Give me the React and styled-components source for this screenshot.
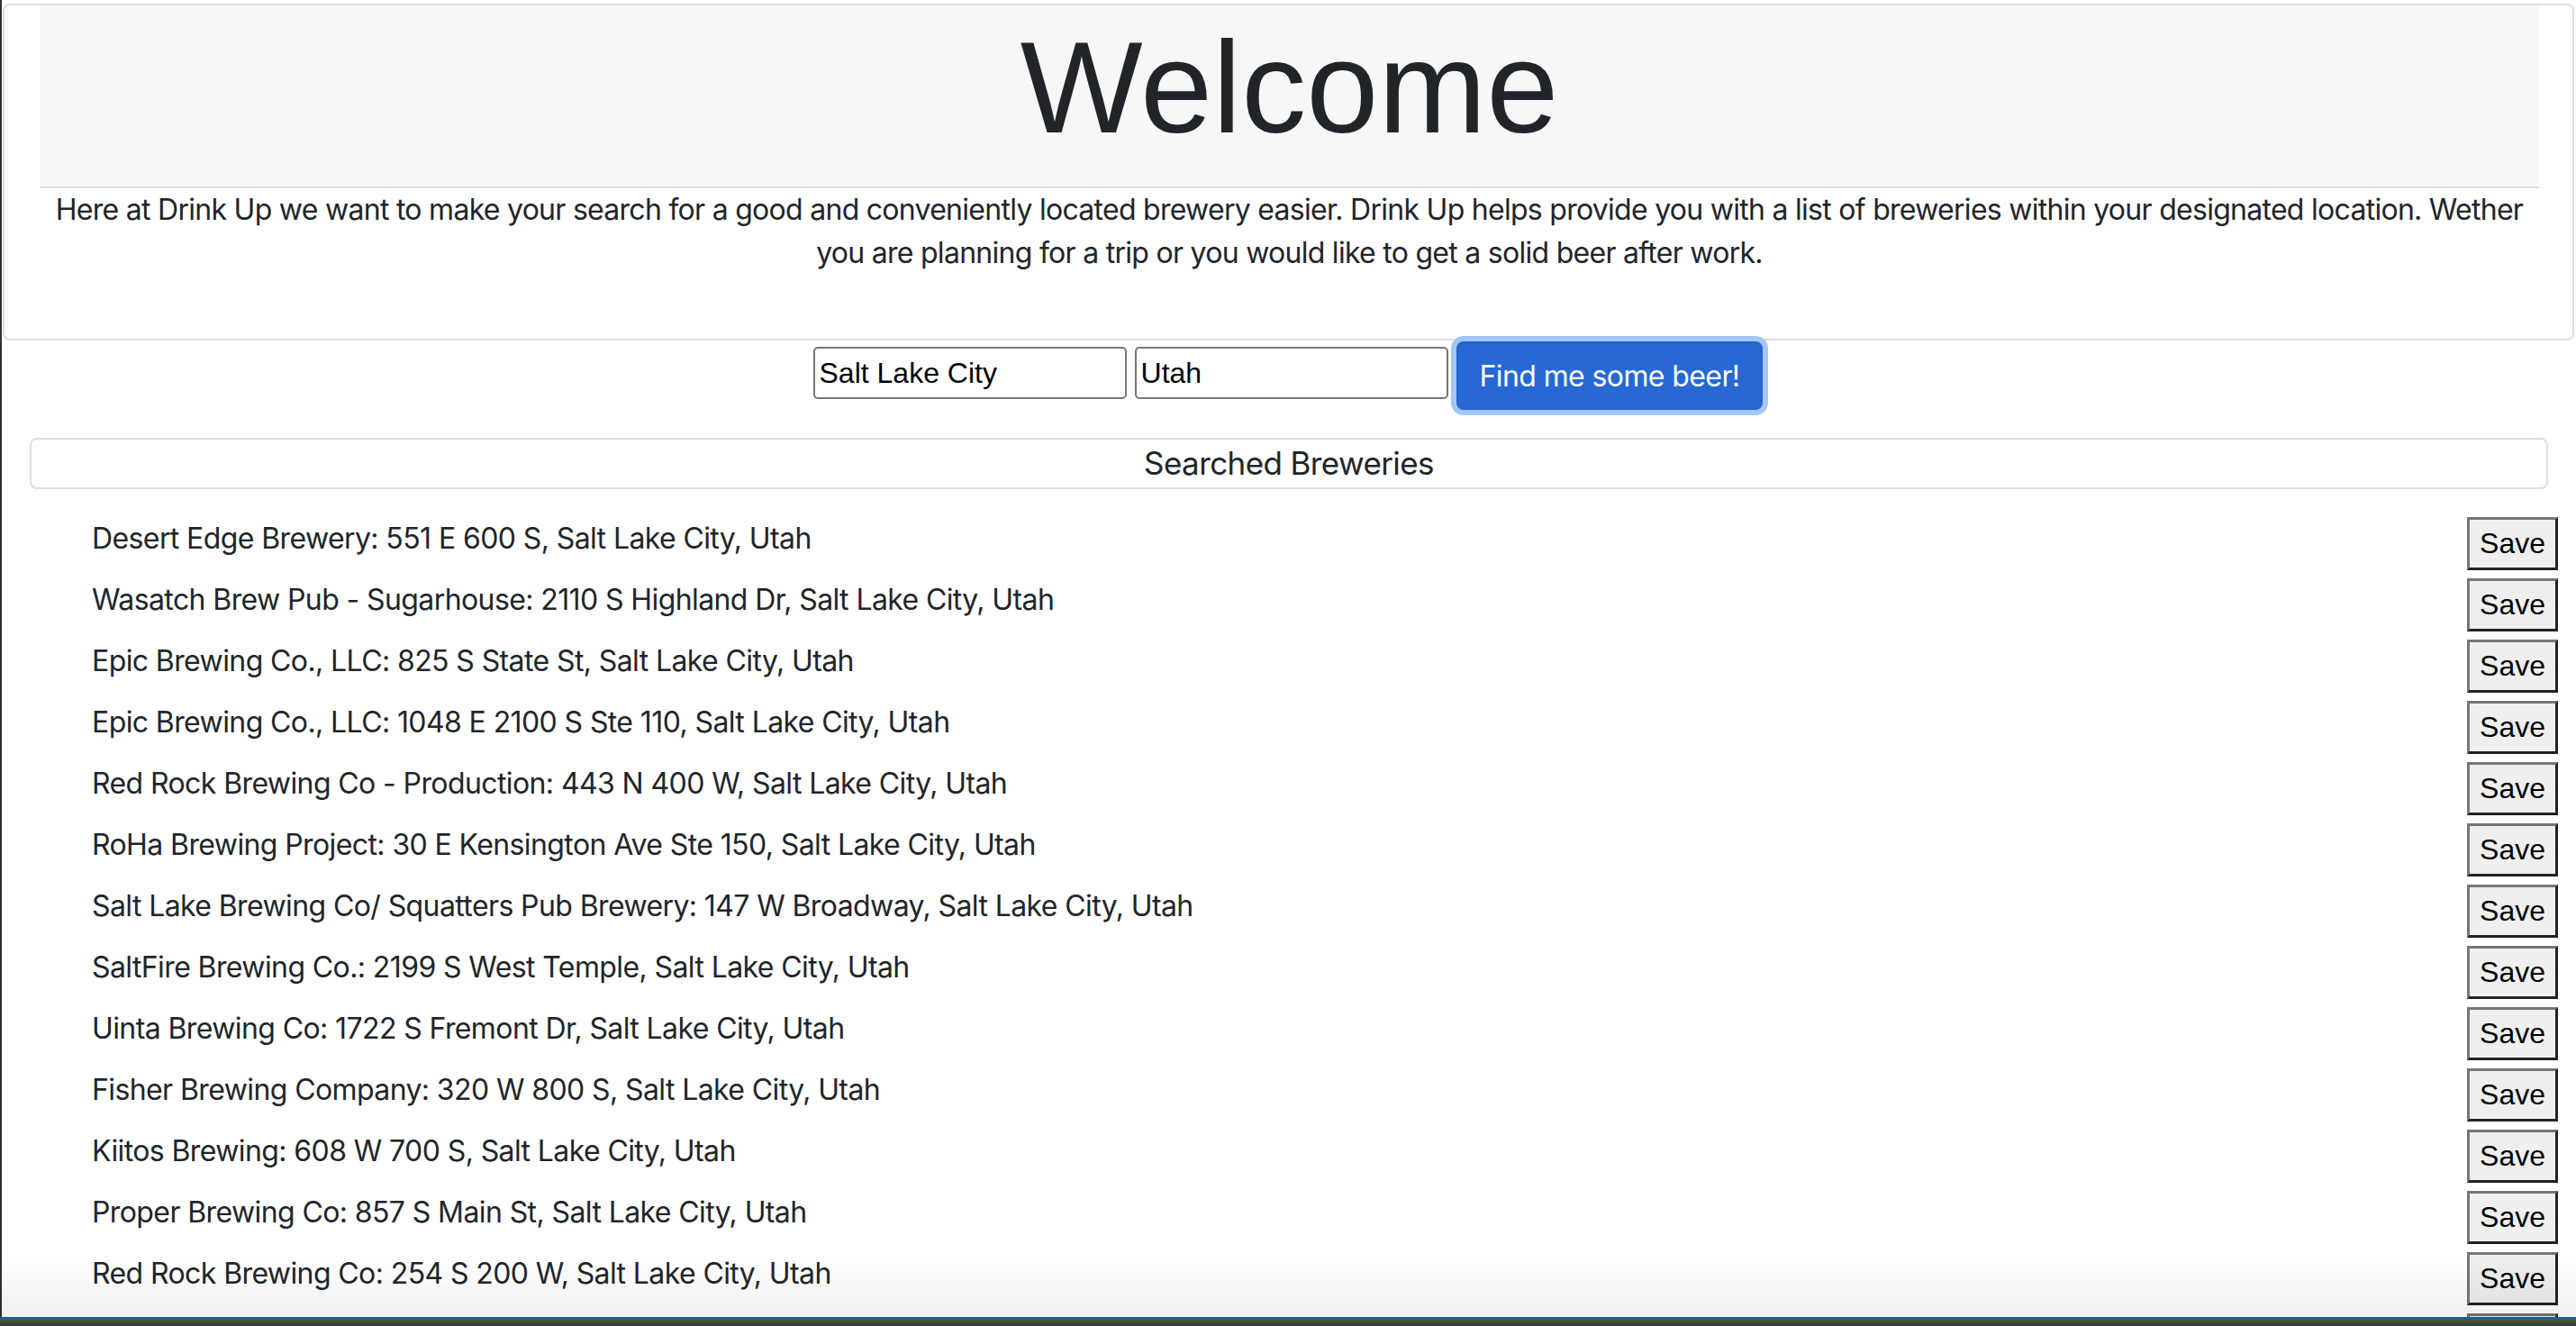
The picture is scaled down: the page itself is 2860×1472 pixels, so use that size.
import React from 'react'
import styled, { createGlobalStyle } from 'styled-components'

const GlobalStyle = createGlobalStyle`
  html, body {
    margin: 0;
    background: #fff;
  }
  body {
    font-family: Inter, "Noto Sans", sans-serif;
    font-size: 32px;
    line-height: 1.5;
    letter-spacing: -0.6px;
    color: #212529;
    overflow: hidden;
  }
`

const Page = styled.div`
  padding-top: 4px;
`

const Card = styled.div`
  margin: 0 2px 0 3px;
  border: 2px solid #dfdfdf;
  border-radius: 8px;
  padding: 0 37px 71px 39px;
`

const Header = styled.div`
  background: #f7f7f7;
  border-bottom: 2px solid #dadada;
  height: 203px;
  padding-top: 6px;
  box-sizing: border-box;
  text-align: center;
`

const Title = styled.h1`
  margin: 0;
  font-family: "Liberation Sans", Arial, sans-serif;
  font-weight: 400;
  font-size: 144px;
  line-height: 1.2;
  letter-spacing: 0;
  color: #212529;
`

const Intro = styled.p`
  margin: 0;
  text-align: center;
  letter-spacing: -0.72px;
`

const SearchRow = styled.form`
  display: flex;
  justify-content: center;
  align-items: flex-start;
  gap: 9px;
  margin-top: 1px;
`

const TextInput = styled.input`
  width: 348px;
  height: 58px;
  margin-top: 6px;
  box-sizing: border-box;
  border: 2px solid #767676;
  border-radius: 5px;
  padding: 0 5px;
  font-family: "Liberation Sans", Arial, sans-serif;
  font-size: 32px;
  color: #000;
  background: #fff;
  outline: none;
`

const FindButton = styled.button`
  height: 76px;
  padding: 0 24px;
  border: 2px solid #2462c8;
  border-radius: 8px;
  background: #2768d3;
  color: #fff;
  font-family: Inter, "Noto Sans", sans-serif;
  font-size: 32px;
  letter-spacing: -0.6px;
  box-shadow: 0 0 0 6px #a3c6f7;
  cursor: pointer;
`

const SectionBox = styled.div`
  margin: 31px 31px 0 33px;
  height: 57px;
  box-sizing: border-box;
  border: 2px solid #dfdfdf;
  border-radius: 8px;
  text-align: center;
  font-size: 35px;
  line-height: 53px;
`

const List = styled.ul`
  list-style: none;
  margin: 31px 0 0;
  padding: 0 20px 0 102px;
`

const Row = styled.li`
  display: flex;
  justify-content: space-between;
  align-items: flex-start;
  height: 59px;
  margin-bottom: 9px;
`

const SaveButton = styled.button`
  height: 59px;
  padding: 0 11px;
  border-style: solid;
  border-width: 3px;
  border-color: #767676 #222 #222 #767676;
  background: #efefef;
  color: #000;
  font-family: "Liberation Sans", Arial, sans-serif;
  font-size: 32px;
  letter-spacing: 0;
  cursor: pointer;
`

const EdgeLeft = styled.div`
  position: fixed;
  left: 0;
  top: 0;
  bottom: 0;
  width: 2px;
  background: #2f2f2f;
`

const BottomFade = styled.div`
  position: fixed;
  left: 0;
  right: 0;
  bottom: 10px;
  height: 70px;
  background: linear-gradient(rgba(0, 0, 0, 0), rgba(0, 0, 0, 0.06));
  pointer-events: none;
`

const Desktop = styled.div`
  position: fixed;
  left: 0;
  right: 0;
  bottom: 0;
  height: 10px;
  background: linear-gradient(#1d5d93 0, #1d5d93 3px, #4d5a3c 3px, #2f3a28 100%);
`

const breweries = [
  'Desert Edge Brewery: 551 E 600 S, Salt Lake City, Utah',
  'Wasatch Brew Pub - Sugarhouse: 2110 S Highland Dr, Salt Lake City, Utah',
  'Epic Brewing Co., LLC: 825 S State St, Salt Lake City, Utah',
  'Epic Brewing Co., LLC: 1048 E 2100 S Ste 110, Salt Lake City, Utah',
  'Red Rock Brewing Co - Production: 443 N 400 W, Salt Lake City, Utah',
  'RoHa Brewing Project: 30 E Kensington Ave Ste 150, Salt Lake City, Utah',
  'Salt Lake Brewing Co/ Squatters Pub Brewery: 147 W Broadway, Salt Lake City, Utah',
  'SaltFire Brewing Co.: 2199 S West Temple, Salt Lake City, Utah',
  'Uinta Brewing Co: 1722 S Fremont Dr, Salt Lake City, Utah',
  'Fisher Brewing Company: 320 W 800 S, Salt Lake City, Utah',
  'Kiitos Brewing: 608 W 700 S, Salt Lake City, Utah',
  'Proper Brewing Co: 857 S Main St, Salt Lake City, Utah',
  'Red Rock Brewing Co: 254 S 200 W, Salt Lake City, Utah',
]

function App() {
  return (
    <Page>
      <GlobalStyle />
      <Card>
        <Header>
          <Title>Welcome</Title>
        </Header>
        <Intro>
          Here at Drink Up we want to make your search for a good and conveniently located brewery easier. Drink Up helps provide you with a list of breweries within your designated location. Wether you are planning for a trip or you would like to get a solid beer after work.
        </Intro>
      </Card>

      <SearchRow onSubmit={e => e.preventDefault()}>
        <TextInput defaultValue="Salt Lake City" />
        <TextInput defaultValue="Utah" />
        <FindButton type="submit">Find me some beer!</FindButton>
      </SearchRow>

      <SectionBox>Searched Breweries</SectionBox>

      <List>
        {breweries.map((b, i) => (
          <Row key={i}>
            <span>{b}</span>
            <SaveButton>Save</SaveButton>
          </Row>
        ))}
        <Row>
          <span />
          <SaveButton>Save</SaveButton>
        </Row>
      </List>

      <EdgeLeft />
      <BottomFade />
      <Desktop />
    </Page>
  )
}

export default App
